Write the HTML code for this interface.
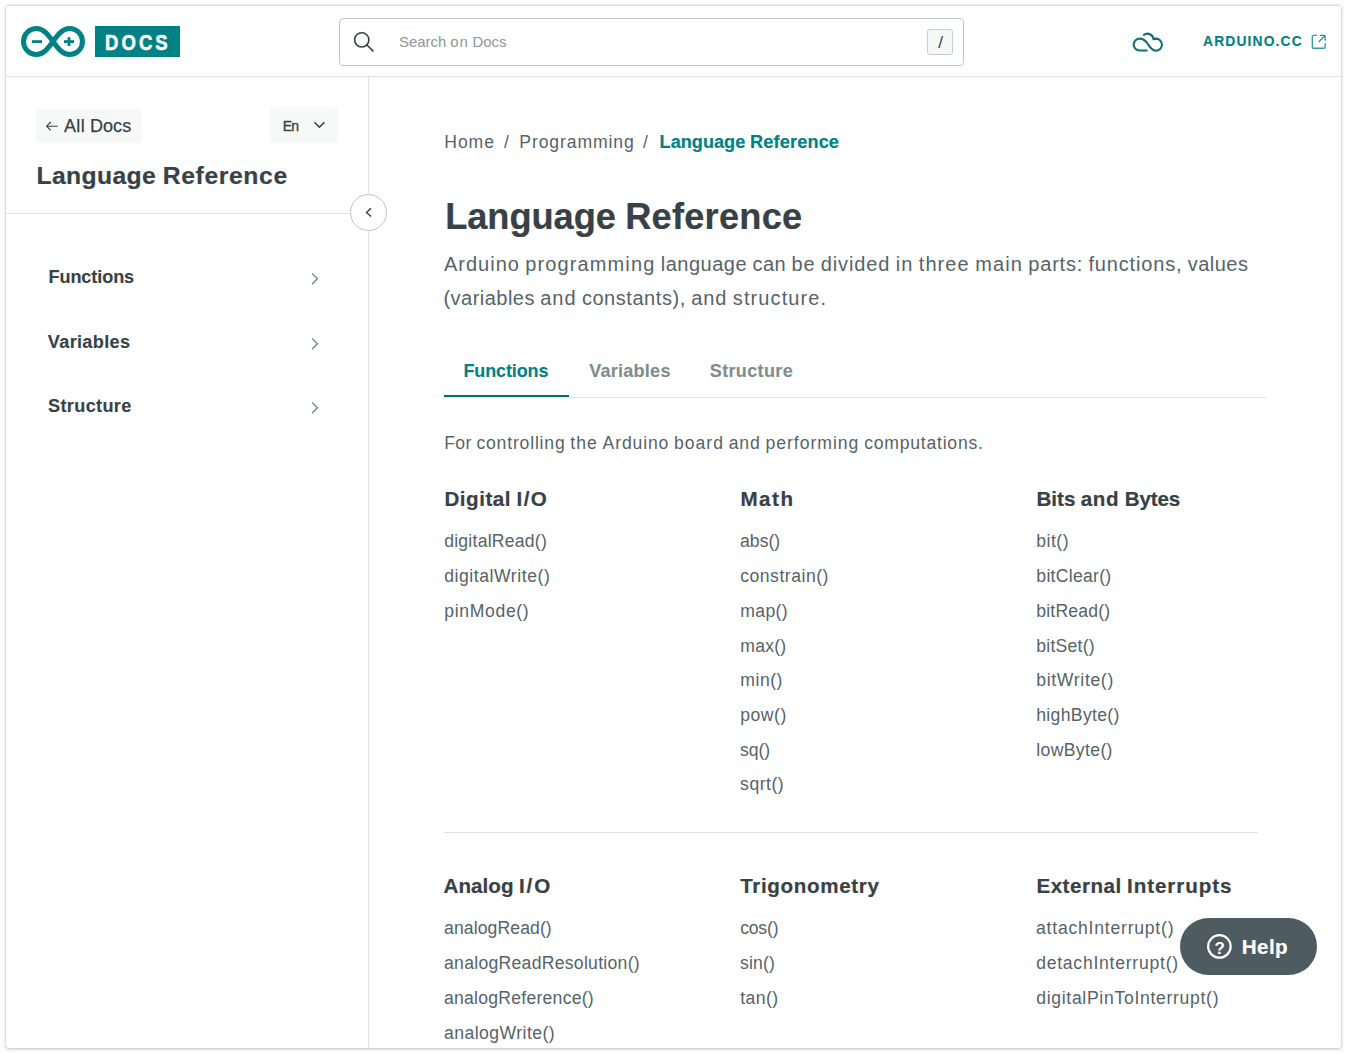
<!DOCTYPE html>
<html lang="en">
<head>
<meta charset="utf-8">
<title>Language Reference | Arduino Documentation</title>
<style>
:root{--ff:"Liberation Sans",sans-serif;--teal:#008184;--dark:#374146;--body:#4e5b61;--grey:#7f8c8d;--line:#dfe2e4;}
*{box-sizing:border-box;margin:0;padding:0}
html,body{width:1347px;height:1054px;overflow:hidden;background:#fff}
body{font-family:var(--ff);color:var(--body);position:relative}
.t{white-space:nowrap;display:inline-block}
#frame{position:absolute;left:6px;top:6px;width:1335px;height:1042px;border-radius:0 0 2px 2px;box-shadow:0 0 1.5px rgba(0,0,0,.3),0 0.5px 4px rgba(0,0,0,.2);overflow:hidden;background:#fff}
#page{position:absolute;left:-6px;top:-6px;width:1347px;height:1054px}
.abs{position:absolute}
.tx{position:absolute;white-space:nowrap;font-weight:400;text-decoration:none;display:block}
#hdr-line{left:6px;top:76px;width:1335px;height:1px;background:var(--line)}
#logo{left:21px;top:26px;width:64px;height:31px}
#docs{left:95px;top:26px;width:85px;height:31px;background:var(--teal)}
#docs-t{left:105.4px;top:29.8px;font-size:22.3px;line-height:26px;font-weight:700;color:#fff;letter-spacing:3.7px;transform:scaleX(.83);transform-origin:0 0;-webkit-text-stroke:.55px #fff}
#search{left:339px;top:18px;width:625px;height:48px;border:1px solid #c3c8c8;border-radius:4px}
#slash{left:927px;top:29px;width:26px;height:26px;border:1px solid #c6cbcb;border-radius:3px;background:#f6f8f8}
#side-line{left:368px;top:77px;width:1px;height:980px;background:var(--line)}
#alldocs{left:36px;top:109px;width:106px;height:34px;background:#f7f9f9;border-radius:4px}
#en{left:270px;top:107px;width:68px;height:36px;background:#f7f9f9;border-radius:4px}
#side-div{left:6px;top:213px;width:362px;height:1px;background:var(--line)}
#toggle{left:350px;top:193.5px;width:37px;height:37px;border:1px solid #bfc4c4;border-radius:50%;background:#fff}
#tab-line{left:444px;top:397px;width:822px;height:1px;background:#e0e3e8}
#tab-ul{left:444px;top:395px;width:125px;height:2px;background:#006d71}
#sec-div{left:444px;top:832px;width:814px;height:1px;background:var(--line)}
#help{left:1180px;top:918px;width:137px;height:57px;border-radius:29px;background:#4e5b61}
</style>
</head>
<body>
<div id="frame"><div id="page">
<header>
<svg id="logo" class="abs" viewBox="21 26 64 31"><path d="M53,41.5 C48,34.5 43.5,28.5 36.5,28.5 A13,13 0 0 0 36.5,54.5 C43.5,54.5 48,48.5 53,41.5 C58,34.5 62.5,28.5 69.5,28.5 A13,13 0 0 1 69.5,54.5 C62.5,54.5 58,48.5 53,41.5 Z" fill="none" stroke="#008184" stroke-width="5"/><rect x="32" y="40.2" width="10" height="2.8" fill="#008184"/><rect x="64" y="40.2" width="10" height="2.8" fill="#008184"/><rect x="67.6" y="37.2" width="2.8" height="8.8" fill="#008184"/></svg>
<div id="docs" class="abs"></div>
<div id="docs-t" class="tx"><span class="t">DOCS</span></div>
<div id="search" class="abs"></div>
<svg class="abs" style="left:353px;top:31px;width:22px;height:22px" viewBox="0 0 22 22"><circle cx="8.75" cy="8.85" r="7.15" fill="none" stroke="#374146" stroke-width="1.6"/><path d="M13.9,14 L20,19.85" stroke="#374146" stroke-width="1.6" stroke-linecap="round"/></svg>
<div id="slash" class="abs"></div>
<svg class="abs" style="left:1125px;top:24px;width:48px;height:36px" viewBox="0 0 48 36"><path d="M21.7,26.55 H14.6 A5.95,5.95 0 0 1 14.6,14.65 C19.5,14.65 21.5,18 23.2,20.5 C25,23.2 27,26.7 30.9,26.7 A6.02,6.02 0 0 0 30.9,14.65 Q29.5,14.7 28.5,15.2 A6,6 0 0 0 18.9,10.9" fill="none" stroke="#0c7378" stroke-width="2.1" stroke-linecap="round" stroke-linejoin="round"/></svg>
<svg class="abs" style="left:1310.6px;top:34px;width:16px;height:16px" viewBox="0 0 16 16"><path d="M6,1.3 H2.5 Q1.3,1.3 1.3,2.5 V13 Q1.3,14.2 2.5,14.2 H13 Q14.2,14.2 14.2,13 V9.3" fill="none" stroke="#008184" stroke-width="1.35" stroke-opacity=".8"/><path d="M8.7,1.3 H13.2 Q14.2,1.3 14.2,2.3 V6.7 M13.6,1.9 L7.7,8" fill="none" stroke="#008184" stroke-width="1.35" stroke-opacity=".85"/></svg>
<div id="hdr-line" class="abs"></div>
<span class="tx" style="left:398.94px;top:33px;font-size:15px;line-height:17px;color:#8c9899;word-spacing:-0.266px"><span style="letter-spacing:-0.005px">Search</span> <span style="letter-spacing:0.773px">on</span> <span style="letter-spacing:-0.066px">Docs</span></span>
<span class="tx" style="left:938.14px;top:31.6px;font-size:17.27px;line-height:20px;color:#374146;letter-spacing:0.188px">/</span>
<a class="tx" style="left:1203px;top:34px;font-size:13.8px;line-height:15px;color:#008184;font-weight:700;-webkit-text-stroke:0.1px #008184;letter-spacing:1.169px">ARDUINO.CC</a>

</header>
<aside>
<div id="side-line" class="abs"></div>
<div id="side-div" class="abs"></div>
<div id="alldocs" class="abs"></div>
<svg class="abs" style="left:45px;top:120px;width:14px;height:12px" viewBox="0 0 14 12"><path d="M12.7,6.2 H1.8 M5.8,2 L1.6,6.2 L5.8,10.4" fill="none" stroke="#374146" stroke-width="1.1"/></svg>
<div id="en" class="abs"></div>
<svg class="abs" style="left:312px;top:119px;width:15px;height:11px" viewBox="0 0 15 11"><path d="M2.4,3.2 L7.4,8.2 L12.4,3.2" fill="none" stroke="#374146" stroke-width="1.6"/></svg>
<div id="toggle" class="abs"></div>
<svg class="abs" style="left:363px;top:206px;width:11px;height:13px" viewBox="0 0 11 13"><path d="M8,2.2 L3.6,6.4 L8,10.6" fill="none" stroke="#374146" stroke-width="1.4"/></svg>
<svg class="abs" style="left:309px;top:271px;width:12px;height:16px" viewBox="0 0 12 16"><path d="M3,2.4 L8.4,7.8 L3,13.2" fill="none" stroke="#727e83" stroke-width="1.3"/></svg>
<svg class="abs" style="left:309px;top:335.5px;width:12px;height:16px" viewBox="0 0 12 16"><path d="M3,2.4 L8.4,7.8 L3,13.2" fill="none" stroke="#727e83" stroke-width="1.3"/></svg>
<svg class="abs" style="left:309px;top:400px;width:12px;height:16px" viewBox="0 0 12 16"><path d="M3,2.4 L8.4,7.8 L3,13.2" fill="none" stroke="#727e83" stroke-width="1.3"/></svg>
<a class="tx" style="left:63.93px;top:116px;font-size:18px;line-height:20px;color:#374146;word-spacing:-0.109px;-webkit-text-stroke:0.25px #374146"><span style="letter-spacing:0.37px">All</span> <span style="letter-spacing:0.06px">Docs</span></a>
<span class="tx" style="left:282.86px;top:118px;font-size:14px;line-height:16px;color:#374146;-webkit-text-stroke:0.35px #374146;letter-spacing:-0.996px">En</span>
<h2 class="tx" style="left:36.57px;top:162px;font-size:24.72px;line-height:27px;color:#374146;font-weight:700;word-spacing:-0.125px;-webkit-text-stroke:0.2px #374146"><span style="letter-spacing:0.336px">Language</span> <span style="letter-spacing:0.611px">Reference</span></h2>
<a class="tx" style="left:48.47px;top:267px;font-size:18.13px;line-height:20px;color:#374146;font-weight:700;-webkit-text-stroke:0.1px #374146;letter-spacing:-0.099px">Functions</a>
<a class="tx" style="left:47.87px;top:332px;font-size:18.13px;line-height:20px;color:#374146;font-weight:700;-webkit-text-stroke:0.1px #374146;letter-spacing:0.321px">Variables</a>
<a class="tx" style="left:48.02px;top:396px;font-size:18.13px;line-height:20px;color:#374146;font-weight:700;-webkit-text-stroke:0.1px #374146;letter-spacing:0.353px">Structure</a>
</aside>
<main>
<div id="tab-line" class="abs"></div>
<div id="tab-ul" class="abs"></div>
<div id="sec-div" class="abs"></div>
<a class="tx" style="left:444.27px;top:132px;font-size:17.6px;line-height:20px;color:#566369;letter-spacing:0.913px">Home</a>
<span class="tx" style="left:503.88px;top:132px;font-size:17.6px;line-height:20px;color:#566369;letter-spacing:1.562px">/</span>
<a class="tx" style="left:519.31px;top:132px;font-size:17.6px;line-height:20px;color:#566369;letter-spacing:0.881px">Programming</a>
<span class="tx" style="left:642.88px;top:132px;font-size:17.6px;line-height:20px;color:#566369;letter-spacing:1.562px">/</span>
<a class="tx" style="left:659.55px;top:132px;font-size:18.13px;line-height:20px;color:#008184;font-weight:700;word-spacing:-0.328px;-webkit-text-stroke:0.2px #008184"><span style="letter-spacing:0.025px">Language</span> <span style="letter-spacing:0.171px">Reference</span></a>
<h1 class="tx" style="left:445.22px;top:196px;font-size:36.26px;line-height:41px;color:#374146;font-weight:700;word-spacing:-0.75px;-webkit-text-stroke:0.2px #374146"><span style="letter-spacing:-0.076px">Language</span> <span style="letter-spacing:0.218px">Reference</span></h1>
<p class="tx" style="left:443.89px;top:253px;font-size:20px;line-height:22px;color:#566369;word-spacing:-0.156px"><span style="letter-spacing:1.02px">Arduino</span> <span style="letter-spacing:1.107px">programming</span> <span style="letter-spacing:0.506px">language</span> <span style="letter-spacing:0.438px">can</span> <span style="letter-spacing:0.812px">be</span> <span style="letter-spacing:0.864px">divided</span> <span style="letter-spacing:1.07px">in</span> <span style="letter-spacing:1.087px">three</span> <span style="letter-spacing:1.098px">main</span> <span style="letter-spacing:0.768px">parts:</span> <span style="letter-spacing:0.842px">functions,</span> <span style="letter-spacing:0.451px">values</span></p>
<p class="tx" style="left:443.48px;top:287px;font-size:20px;line-height:22px;color:#566369;word-spacing:-0.156px"><span style="letter-spacing:0.469px">(variables</span> <span style="letter-spacing:0.948px">and</span> <span style="letter-spacing:0.548px">constants),</span> <span style="letter-spacing:0.948px">and</span> <span style="letter-spacing:1.11px">structure.</span></p>
<a class="tx" style="left:463.42px;top:361px;font-size:18.03px;line-height:20px;color:#008184;font-weight:700;-webkit-text-stroke:0.1px #008184;letter-spacing:-0.128px">Functions</a>
<a class="tx" style="left:589.15px;top:361px;font-size:18.03px;line-height:20px;color:#7f8c8d;font-weight:700;-webkit-text-stroke:0.1px #7f8c8d;letter-spacing:0.267px">Variables</a>
<a class="tx" style="left:709.78px;top:361px;font-size:18.03px;line-height:20px;color:#7f8c8d;font-weight:700;-webkit-text-stroke:0.1px #7f8c8d;letter-spacing:0.351px">Structure</a>
<p class="tx" style="left:444.27px;top:433px;font-size:17.6px;line-height:20px;color:#566369;word-spacing:-0.033px"><span style="letter-spacing:0.297px">For</span> <span style="letter-spacing:0.807px">controlling</span> <span style="letter-spacing:0.969px">the</span> <span style="letter-spacing:0.859px">Arduino</span> <span style="letter-spacing:0.959px">board</span> <span style="letter-spacing:0.802px">and</span> <span style="letter-spacing:0.991px">performing</span> <span style="letter-spacing:0.756px">computations.</span></p>
<h3 class="tx" style="left:444.42px;top:487px;font-size:20.6px;line-height:23px;color:#374146;font-weight:700;word-spacing:-0.328px;-webkit-text-stroke:0.2px #374146"><span style="letter-spacing:0.52px">Digital</span> <span style="letter-spacing:1.519px">I/O</span></h3>
<a class="tx" style="left:444.17px;top:531px;font-size:17.6px;line-height:20px;color:#566369;letter-spacing:0.244px">digitalRead()</a>
<a class="tx" style="left:444.17px;top:566px;font-size:17.6px;line-height:20px;color:#566369;letter-spacing:0.554px">digitalWrite()</a>
<a class="tx" style="left:444.32px;top:601px;font-size:17.6px;line-height:20px;color:#566369;letter-spacing:0.645px">pinMode()</a>
<h3 class="tx" style="left:740.42px;top:487px;font-size:20.6px;line-height:23px;color:#374146;font-weight:700;-webkit-text-stroke:0.2px #374146;letter-spacing:1.503px">Math</h3>
<a class="tx" style="left:740.04px;top:531px;font-size:17.6px;line-height:20px;color:#566369;letter-spacing:0.027px">abs()</a>
<a class="tx" style="left:740.17px;top:566px;font-size:17.6px;line-height:20px;color:#566369;letter-spacing:0.522px">constrain()</a>
<a class="tx" style="left:740.26px;top:601px;font-size:17.6px;line-height:20px;color:#566369;letter-spacing:0.371px">map()</a>
<a class="tx" style="left:740.26px;top:636px;font-size:17.6px;line-height:20px;color:#566369;letter-spacing:0.252px">max()</a>
<a class="tx" style="left:740.27px;top:670px;font-size:17.6px;line-height:20px;color:#566369;letter-spacing:0.531px">min()</a>
<a class="tx" style="left:740.32px;top:705px;font-size:17.6px;line-height:20px;color:#566369;letter-spacing:0.492px">pow()</a>
<a class="tx" style="left:740.12px;top:740px;font-size:17.6px;line-height:20px;color:#566369;letter-spacing:-0.133px">sq()</a>
<a class="tx" style="left:740.12px;top:774px;font-size:17.6px;line-height:20px;color:#566369;letter-spacing:0.513px">sqrt()</a>
<h3 class="tx" style="left:1036.42px;top:487px;font-size:20.6px;line-height:23px;color:#374146;font-weight:700;word-spacing:-0.328px;-webkit-text-stroke:0.2px #374146"><span style="letter-spacing:0.016px">Bits</span> <span style="letter-spacing:0.62px">and</span> <span style="letter-spacing:-0.124px">Bytes</span></h3>
<a class="tx" style="left:1036.32px;top:531px;font-size:17.6px;line-height:20px;color:#566369;letter-spacing:0.469px">bit()</a>
<a class="tx" style="left:1036.32px;top:566px;font-size:17.6px;line-height:20px;color:#566369;letter-spacing:0.285px">bitClear()</a>
<a class="tx" style="left:1036.32px;top:601px;font-size:17.6px;line-height:20px;color:#566369;letter-spacing:0.183px">bitRead()</a>
<a class="tx" style="left:1036.32px;top:636px;font-size:17.6px;line-height:20px;color:#566369;letter-spacing:0.222px">bitSet()</a>
<a class="tx" style="left:1036.32px;top:670px;font-size:17.6px;line-height:20px;color:#566369;letter-spacing:0.655px">bitWrite()</a>
<a class="tx" style="left:1036.23px;top:705px;font-size:17.6px;line-height:20px;color:#566369;letter-spacing:0.336px">highByte()</a>
<a class="tx" style="left:1036.3px;top:740px;font-size:17.6px;line-height:20px;color:#566369;letter-spacing:0.354px">lowByte()</a>
<h3 class="tx" style="left:443.54px;top:874px;font-size:20.6px;line-height:23px;color:#374146;font-weight:700;word-spacing:-0.328px;-webkit-text-stroke:0.2px #374146"><span style="letter-spacing:0.036px">Analog</span> <span style="letter-spacing:1.881px">I/O</span></h3>
<a class="tx" style="left:444.04px;top:918px;font-size:17.6px;line-height:20px;color:#566369;letter-spacing:0.098px">analogRead()</a>
<a class="tx" style="left:444.04px;top:953px;font-size:17.6px;line-height:20px;color:#566369;letter-spacing:0.281px">analogReadResolution()</a>
<a class="tx" style="left:444.04px;top:988px;font-size:17.6px;line-height:20px;color:#566369;letter-spacing:0.244px">analogReference()</a>
<a class="tx" style="left:444.04px;top:1023px;font-size:17.6px;line-height:20px;color:#566369;letter-spacing:0.445px">analogWrite()</a>
<h3 class="tx" style="left:740.17px;top:874px;font-size:20.6px;line-height:23px;color:#374146;font-weight:700;-webkit-text-stroke:0.2px #374146;letter-spacing:0.647px">Trigonometry</h3>
<a class="tx" style="left:740.17px;top:918px;font-size:17.6px;line-height:20px;color:#566369;letter-spacing:-0.186px">cos()</a>
<a class="tx" style="left:740.12px;top:953px;font-size:17.6px;line-height:20px;color:#566369;letter-spacing:0.125px">sin()</a>
<a class="tx" style="left:740.16px;top:988px;font-size:17.6px;line-height:20px;color:#566369;letter-spacing:0.445px">tan()</a>
<h3 class="tx" style="left:1036.42px;top:874px;font-size:20.6px;line-height:23px;color:#374146;font-weight:700;word-spacing:-0.328px;-webkit-text-stroke:0.2px #374146"><span style="letter-spacing:0.5px">External</span> <span style="letter-spacing:0.914px">Interrupts</span></h3>
<a class="tx" style="left:1036.04px;top:918px;font-size:17.6px;line-height:20px;color:#566369;letter-spacing:0.77px">attachInterrupt()</a>
<a class="tx" style="left:1036.17px;top:953px;font-size:17.6px;line-height:20px;color:#566369;letter-spacing:0.743px">detachInterrupt()</a>
<a class="tx" style="left:1036.17px;top:988px;font-size:17.6px;line-height:20px;color:#566369;letter-spacing:0.689px">digitalPinToInterrupt()</a>
</main>
<div id="helpwrap">
<div id="help" class="abs"></div>
<svg class="abs" style="left:1205px;top:932px;width:28px;height:28px" viewBox="0 0 28 28"><circle cx="14.4" cy="14.4" r="11.25" fill="none" stroke="#fff" stroke-width="2.2"/></svg>
<div class="tx" style="left:1214.4px;top:935.5px;font-size:17px;line-height:25px;font-weight:700;color:#fff"><span class="t">?</span></div>
<span class="tx" style="left:1241.77px;top:935px;font-size:20.6px;line-height:23px;color:#ffffff;font-weight:700;-webkit-text-stroke:0.2px #ffffff;letter-spacing:0.417px">Help</span>
</div>
</div></div>
</body>
</html>
